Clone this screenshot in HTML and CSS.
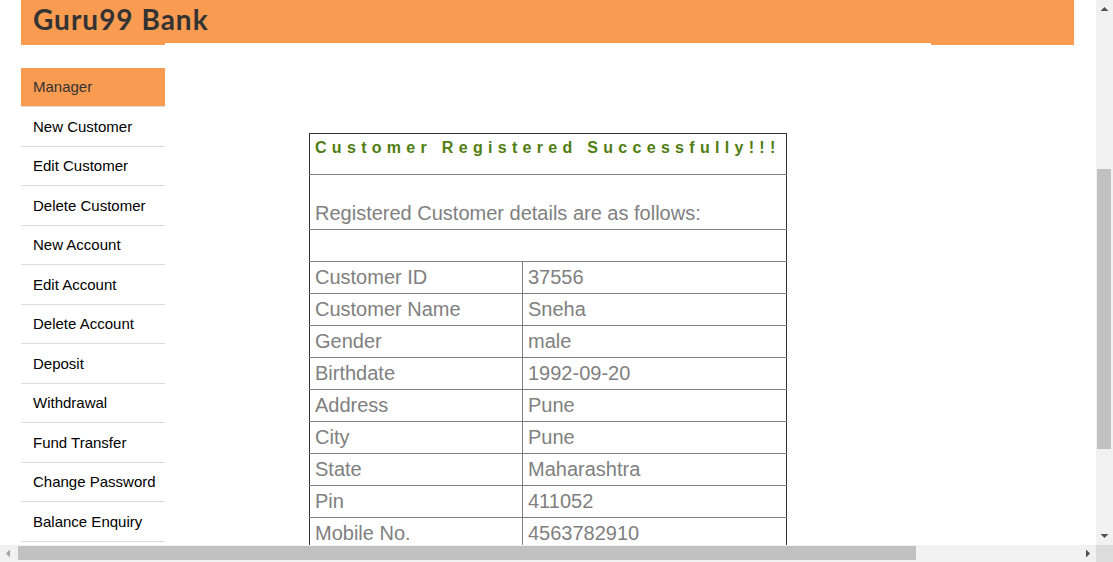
FILE: index.html
```html
<!DOCTYPE html>
<html>
<head>
<meta charset="utf-8">
<title>Guru99 Bank</title>
<link rel="stylesheet" href="styles.css">
</head>
<body>
<div class="screen">
  <div class="viewport">
    <div class="page">
      <header class="header">
        <div class="header-bar"><h2 class="brand">Guru99 Bank</h2></div>
        <div class="header-tabs">
          <div class="tab-left"></div>
          <div class="tab-gap"></div>
          <div class="tab-right"></div>
        </div>
      </header>
      <div class="body-row">
        <nav class="menu">
          <a class="menu-item active">Manager</a>
          <a class="menu-item">New Customer</a>
          <a class="menu-item">Edit Customer</a>
          <a class="menu-item">Delete Customer</a>
          <a class="menu-item">New Account</a>
          <a class="menu-item">Edit Account</a>
          <a class="menu-item">Delete Account</a>
          <a class="menu-item">Deposit</a>
          <a class="menu-item">Withdrawal</a>
          <a class="menu-item">Fund Transfer</a>
          <a class="menu-item">Change Password</a>
          <a class="menu-item">Balance Enquiry</a>
        </nav>
        <main class="content">
          <table class="details">
            <tr><td colspan="2" class="heading">Customer Registered Successfully!!!</td></tr>
            <tr><td colspan="2" class="intro">Registered Customer details are as follows:</td></tr>
            <tr><td colspan="2" class="blank"></td></tr>
            <tr><td class="label">Customer ID</td><td>37556</td></tr>
            <tr><td class="label">Customer Name</td><td>Sneha</td></tr>
            <tr><td class="label">Gender</td><td>male</td></tr>
            <tr><td class="label">Birthdate</td><td>1992-09-20</td></tr>
            <tr><td class="label">Address</td><td>Pune</td></tr>
            <tr><td class="label">City</td><td>Pune</td></tr>
            <tr><td class="label">State</td><td>Maharashtra</td></tr>
            <tr><td class="label">Pin</td><td>411052</td></tr>
            <tr><td class="label">Mobile No.</td><td>4563782910</td></tr>
          </table>
        </main>
      </div>
    </div>
  </div>
  <div class="vscroll">
    <div class="arrow-btn"><svg width="17" height="17" viewBox="0 0 17 17"><path d="M4.5 11h8L8.5 7z" fill="#505050"/></svg></div>
    <div class="vtrack"><div class="vthumb"></div></div>
    <div class="arrow-btn"><svg width="17" height="17" viewBox="0 0 17 17"><path d="M4.5 6h8L8.5 10z" fill="#505050"/></svg></div>
  </div>
  <div class="hscroll">
    <div class="arrow-btn"><svg width="17" height="17" viewBox="0 0 17 17"><path d="M10 4.5v8L6 8.5z" fill="#a3a3a3"/></svg></div>
    <div class="htrack"><div class="hthumb"></div></div>
    <div class="arrow-btn"><svg width="17" height="17" viewBox="0 0 17 17"><path d="M7 4.5v8L11 8.5z" fill="#505050"/></svg></div>
  </div>
  <div class="corner"></div>
</div>
</body>
</html>
```

FILE: styles.css
```css
html, body {
  margin: 0;
  padding: 0;
  background: #ffffff;
  overflow: hidden;
}

.screen {
  display: grid;
  grid-template-columns: 1096px 17px;
  grid-template-rows: 545px 17px;
  width: 1113px;
  height: 562px;
}

.viewport {
  overflow: hidden;
  background: #ffffff;
}

.page {
  margin-left: 21px;
  width: 1053px;
}

.header-bar {
  background: #f99b51;
  height: 43px;
  padding-left: 12px;
  box-sizing: border-box;
}

.brand {
  margin: 0;
  font-family: "Lato", "Noto Sans", sans-serif;
  font-weight: 700;
  font-size: 28px;
  line-height: 38px;
  color: #333333;
  letter-spacing: 1px;
  white-space: nowrap;
}

.header-tabs {
  display: flex;
  height: 2px;
}

.tab-left {
  width: 144px;
  background: #f99b51;
}

.tab-gap {
  width: 766px;
  background: #ffffff;
}

.tab-right {
  flex: 1;
  background: #f99b51;
}

.body-row {
  display: flex;
  margin-top: 23px;
}

.menu {
  width: 144px;
  display: flex;
  flex-direction: column;
  flex-shrink: 0;
}

.menu-item {
  display: block;
  font-family: "Liberation Sans", Arial, sans-serif;
  font-size: 15px;
  line-height: 20.5px;
  color: #000000;
  padding: 9.5px 12px 8.5px;
  border-bottom: 1px solid #dddddd;
  white-space: nowrap;
}

.menu-item.active {
  background: #f99b51;
  color: #333333;
  padding: 9px 12px 9px;
  height: 20px;
}

.content {
  padding-left: 144px;
  padding-top: 65px;
}

.details {
  border-collapse: collapse;
  width: 478px;
  border: 1px solid #333333;
  font-family: "Liberation Sans", Arial, sans-serif;
  font-size: 20px;
  color: #808080;
}

.details td {
  border: 1px solid #808080;
  padding: 0 5px;
  height: 31px;
  line-height: 23px;
  vertical-align: middle;
  white-space: nowrap;
}

.details tr:first-child td {
  border-top-color: #333333;
}

.details td:first-child {
  border-left-color: #333333;
}

.details td:last-child {
  border-right-color: #333333;
}

.details td.label {
  width: 202px;
}

.details td.heading {
  height: 41px;
  vertical-align: top;
  padding-top: 5px;
  box-sizing: border-box;
  font-size: 16px;
  line-height: 18px;
  font-weight: 700;
  letter-spacing: 5.3px;
  color: #4f7d10;
}

.details td.intro {
  height: 55px;
  vertical-align: bottom;
  padding-bottom: 4px;
  box-sizing: border-box;
}

.details td.blank {
  height: 31px;
}

.vscroll {
  background: #f1f1f1;
  display: flex;
  flex-direction: column;
}

.arrow-btn {
  width: 17px;
  height: 17px;
  flex-shrink: 0;
}

.arrow-btn svg {
  display: block;
}

.vtrack {
  flex: 1;
  padding-top: 152px;
}

.vthumb {
  width: 14px;
  height: 280px;
  margin-left: 1px;
  background: #c1c1c1;
}

.hscroll {
  background: #f1f1f1;
  display: flex;
}

.htrack {
  flex: 1;
  padding-top: 1px;
  padding-left: 1px;
}

.hthumb {
  width: 898px;
  height: 14px;
  background: #c1c1c1;
}

.corner {
  background: #dcdcdc;
}
```
